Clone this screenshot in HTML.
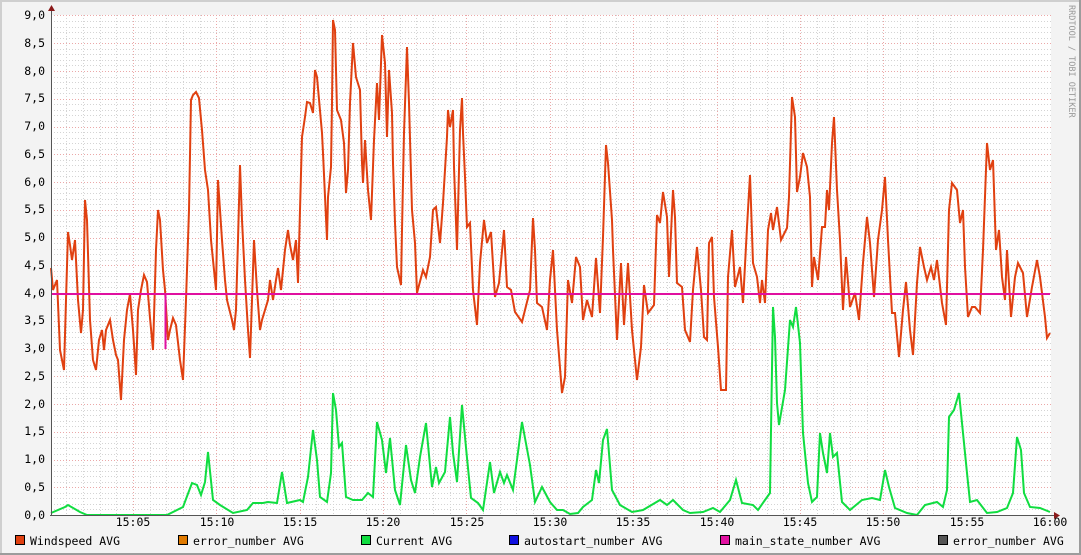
<!DOCTYPE html>
<html><head><meta charset="utf-8"><style>
html,body{margin:0;padding:0;background:#f3f3f3;}
svg{display:block;}
text{font-family:"DejaVu Sans Mono","Liberation Mono",monospace;font-size:11.5px;fill:#000;}
</style></head><body>
<svg width="1081" height="555" viewBox="0 0 1081 555" xmlns="http://www.w3.org/2000/svg">
<rect x="0" y="0" width="1081" height="555" fill="#f3f3f3"/>
<rect x="0" y="0" width="1081" height="2" fill="#cfcfcf"/>
<rect x="0" y="0" width="2" height="555" fill="#cfcfcf"/>
<rect x="0" y="553" width="1081" height="2" fill="#9c9c9c"/>
<rect x="1079" y="0" width="2" height="555" fill="#9c9c9c"/>
<rect x="51" y="15" width="1000" height="500" fill="#ffffff"/>
<g id="grid" stroke-dasharray="1,2" stroke-width="1" shape-rendering="crispEdges"></g>
<script>
(function(){
var s='',r='',h='',hr='';
for(var k=1;k<=54;k++){var x=Math.round(49.6+16.673*k)+0.5; if(k%5==0) r+='M'+x+' 15V515'; else s+='M'+x+' 15V515';}
for(var j=1;j<90;j++){var y=Math.round(515-5.55*j)+0.5; if(j%5==0) hr+='M51 '+y+'H1051'; else h+='M51 '+y+'H1051';}
var g=document.getElementById('grid');
function add(d,c){var p=document.createElementNS('http://www.w3.org/2000/svg','path');p.setAttribute('d',d);p.setAttribute('stroke',c);p.setAttribute('fill','none');g.appendChild(p);}
add(h,'#d4d4d4');add(s,'#d4d4d4');add(hr,'#eba8a8');add(r,'#eba8a8');add('M51 15.5H1051','#eba8a8');
})();
</script>
<g>
<text x="45" y="19" text-anchor="end">9,0</text>
<text x="45" y="47" text-anchor="end">8,5</text>
<text x="45" y="75" text-anchor="end">8,0</text>
<text x="45" y="102" text-anchor="end">7,5</text>
<text x="45" y="130" text-anchor="end">7,0</text>
<text x="45" y="158" text-anchor="end">6,5</text>
<text x="45" y="186" text-anchor="end">6,0</text>
<text x="45" y="213" text-anchor="end">5,5</text>
<text x="45" y="241" text-anchor="end">5,0</text>
<text x="45" y="269" text-anchor="end">4,5</text>
<text x="45" y="297" text-anchor="end">4,0</text>
<text x="45" y="324" text-anchor="end">3,5</text>
<text x="45" y="352" text-anchor="end">3,0</text>
<text x="45" y="380" text-anchor="end">2,5</text>
<text x="45" y="408" text-anchor="end">2,0</text>
<text x="45" y="435" text-anchor="end">1,5</text>
<text x="45" y="463" text-anchor="end">1,0</text>
<text x="45" y="491" text-anchor="end">0,5</text>
<text x="45" y="519" text-anchor="end">0,0</text>
</g>
<g text-anchor="middle">
<text x="133" y="526">15:05</text><text x="217" y="526">15:10</text><text x="300" y="526">15:15</text>
<text x="383" y="526">15:20</text><text x="467" y="526">15:25</text><text x="550" y="526">15:30</text>
<text x="633" y="526">15:35</text><text x="717" y="526">15:40</text><text x="800" y="526">15:45</text>
<text x="883" y="526">15:50</text><text x="967" y="526">15:55</text><text x="1050" y="526">16:00</text>
</g>
<g fill="none" stroke-width="2" stroke-linejoin="miter">
<polyline stroke="#e04010" points="51,268 53,290 57,280 60,350 64,370 66,300 68,232 70,245 72,260 75,240 78,300 81,333 83,310 85,200 87,220 90,320 93,360 96,370 99,340 102,330 104,350 106,330 110,320 113,340 116,355 118,360 121,400 124,340 127,310 130,294 133,330 136,375 138,310 141,290 144,275 147,282 150,318 153,350 156,250 158,210 160,220 163,270 165,290 168,340 170,330 173,318 176,325 180,360 183,380 186,300 189,210 191,100 193,95 196,92 199,98 202,130 205,170 208,190 211,240 214,270 216,290 218,180 220,210 222,240 225,280 227,300 229,308 232,320 234,330 236,310 238,240 240,165 242,220 245,280 248,330 250,358 252,300 254,240 257,290 260,330 262,320 265,310 268,300 270,280 273,300 276,280 278,268 281,290 283,270 285,250 288,230 290,245 293,260 296,240 298,283 300,210 302,137 305,117 307,102 310,103 313,113 315,70 317,77 322,133 323,153 327,240 328,197 331,167 332,103 333,20 335,30 337,110 341,120 344,143 346,193 348,170 350,103 353,43 356,77 360,90 362,163 363,183 365,140 368,190 371,220 374,140 377,83 379,120 382,35 385,63 387,137 389,70 392,113 393,163 395,223 397,267 401,285 402,230 404,133 407,47 409,103 412,210 415,243 417,293 423,270 426,277 430,257 433,210 436,207 440,243 443,203 447,137 448,110 450,127 453,110 454,167 457,250 460,130 462,98 463,133 465,177 467,227 470,223 473,290 477,325 480,263 484,220 487,243 491,232 495,297 499,283 504,230 507,287 511,290 515,312 522,322 525,310 530,290 533,218 535,250 537,303 542,307 547,330 550,280 553,250 557,330 562,393 565,377 568,280 572,303 576,257 580,267 583,320 587,300 592,317 596,258 600,313 603,237 606,145 608,163 612,220 613,250 617,340 621,263 624,325 628,263 632,330 637,380 641,347 644,285 648,313 654,305 657,215 660,223 663,192 667,217 669,277 673,190 675,217 677,283 682,287 685,330 690,342 693,290 697,247 701,290 704,337 707,340 709,243 712,237 714,297 718,347 721,390 726,390 728,277 732,230 735,287 740,267 743,303 747,227 750,175 753,263 757,277 760,303 762,280 765,303 768,230 771,213 773,230 777,207 781,240 787,228 789,197 792,97 795,117 797,192 800,177 803,153 807,167 810,197 812,287 814,257 818,280 822,227 825,227 827,190 829,210 832,143 834,117 837,190 840,240 843,310 846,257 850,307 855,293 859,320 863,263 867,217 870,243 874,297 878,240 882,210 885,177 888,240 892,313 895,313 899,357 903,310 906,282 910,330 913,355 917,283 920,247 924,267 927,280 931,267 934,280 937,260 942,303 946,325 949,210 952,183 957,190 960,223 963,210 965,267 968,317 972,307 975,307 980,313 983,250 987,143 990,170 993,160 996,250 999,230 1002,277 1005,300 1007,250 1011,317 1015,277 1018,263 1023,273 1027,317 1032,287 1037,260 1040,277 1045,317 1047,338 1050,333"/>
<polyline stroke="#10dd40" points="51,513 65,507 68,505 80,512 87,515 167,515 183,507 192,483 197,485 201,495 205,482 208,452 213,500 220,505 233,513 247,510 253,503 263,503 268,502 277,503 282,472 287,503 300,500 303,502 308,477 313,430 317,460 320,497 327,502 331,473 333,393 336,410 339,447 342,443 346,497 353,500 362,500 368,493 373,497 377,422 382,440 386,473 390,438 395,490 400,505 406,445 411,480 415,493 420,457 426,423 432,487 436,467 439,483 445,472 450,417 453,453 457,482 462,405 467,458 471,498 478,503 483,510 490,462 494,493 500,472 504,483 507,475 513,490 522,422 530,465 535,502 542,487 550,502 557,510 563,510 570,514 578,513 583,507 592,500 596,470 599,483 603,440 607,429 612,490 620,505 632,512 643,510 660,500 667,505 673,500 683,510 690,513 703,512 713,508 720,512 730,500 736,480 742,503 753,505 758,510 765,500 770,493 773,307 775,337 777,403 779,425 785,390 790,320 793,327 796,307 800,343 803,433 808,483 812,502 817,497 820,433 823,453 827,473 830,433 833,457 837,453 842,502 850,510 862,500 872,498 880,500 885,470 889,487 895,508 907,513 917,515 925,505 937,502 943,507 947,490 949,417 954,410 959,393 963,433 967,473 970,502 977,500 987,513 997,512 1007,508 1013,493 1017,437 1021,450 1024,493 1030,507 1040,508 1050,512"/>
<path stroke="#e010a0" d="M51 294H1050M165.5 294V349"/>
</g>
<path d="M51.5 10V516M50 515.5H1055" stroke="#555" stroke-width="1" fill="none"/>
<path d="M48 11L51.5 5L55 11Z" fill="#8b1a1a"/>
<path d="M1054 512L1060 515.5L1054 519Z" fill="#8b1a1a"/>
<text x="1069" y="5" transform="rotate(90 1069 5)" style="font-size:8.5px;fill:#999">RRDTOOL / TOBI OETIKER</text>
<g stroke="#000" stroke-width="1">
<rect x="15.5" y="535.5" width="9" height="9" fill="#e04010"/>
<rect x="178.5" y="535.5" width="9" height="9" fill="#e07a00"/>
<rect x="361.5" y="535.5" width="9" height="9" fill="#10dd40"/>
<rect x="509.5" y="535.5" width="9" height="9" fill="#1010e0"/>
<rect x="720.5" y="535.5" width="9" height="9" fill="#e010a0"/>
<rect x="938.5" y="535.5" width="9" height="9" fill="#555555"/>
</g>
<text x="30" y="545">Windspeed AVG</text>
<text x="193" y="545">error_number AVG</text>
<text x="376" y="545">Current AVG</text>
<text x="524" y="545">autostart_number AVG</text>
<text x="735" y="545">main_state_number AVG</text>
<text x="953" y="545">error_number AVG</text>
</svg>
</body></html>
